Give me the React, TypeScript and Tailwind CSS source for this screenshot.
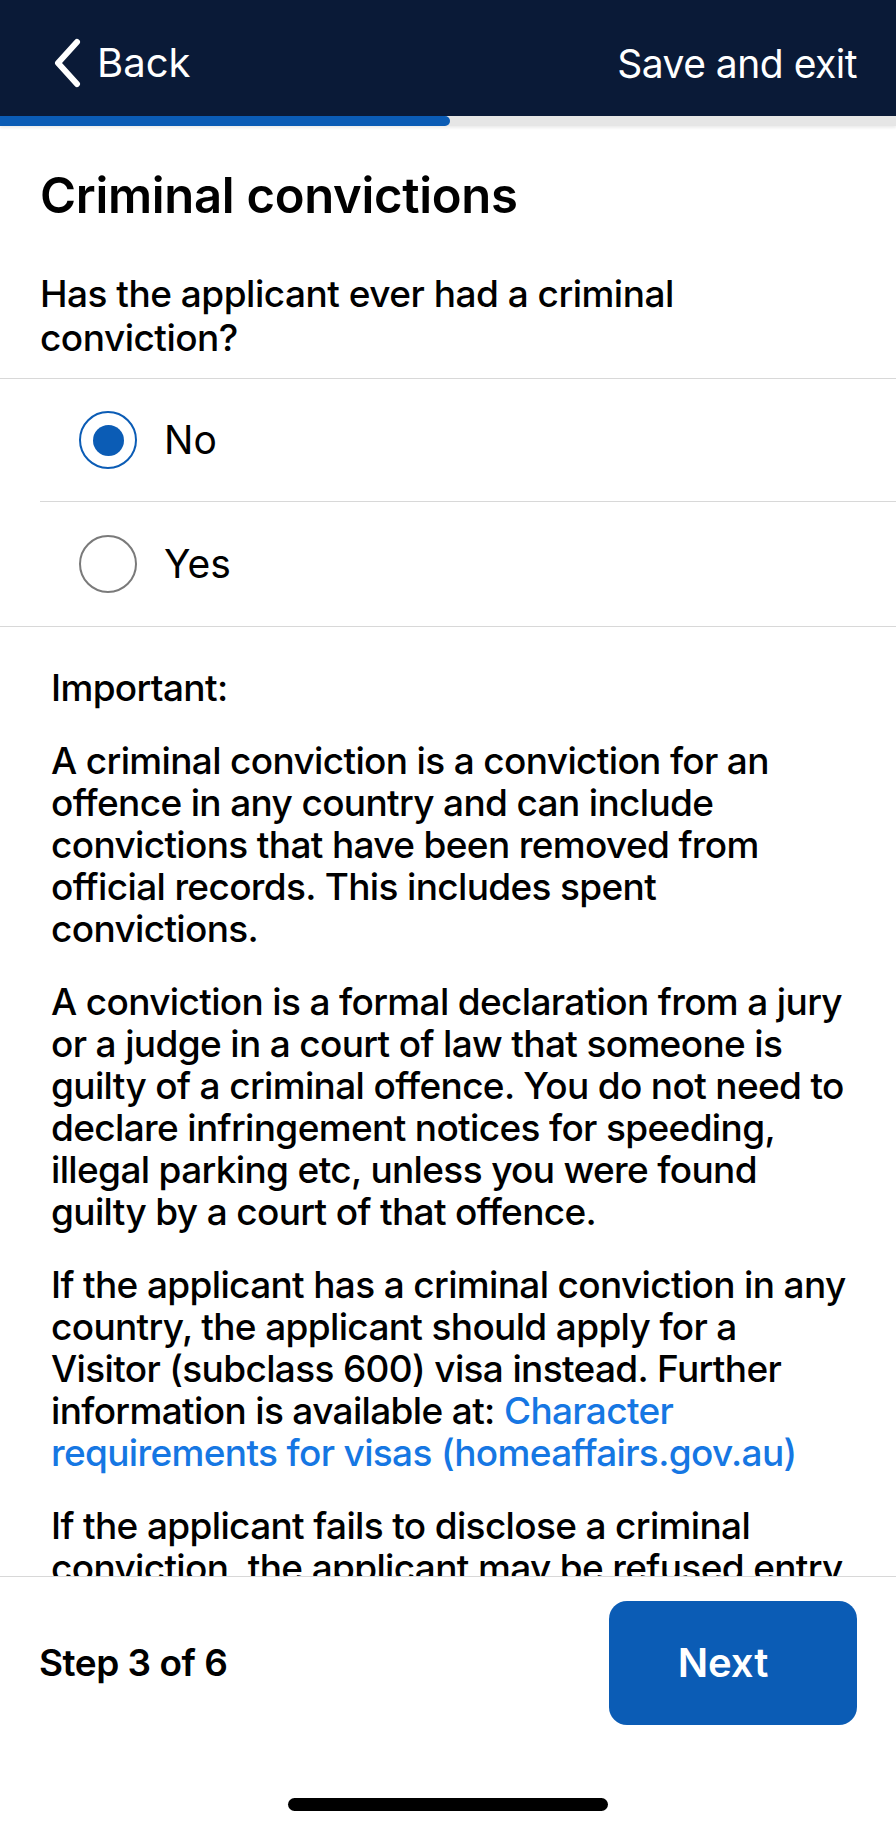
import { useState } from "react";

function Chevron() {
  return (
    <svg width="30" height="50" viewBox="0 0 30 50" fill="none">
      <path
        d="M25 4 L6 25 L25 46"
        stroke="white"
        strokeWidth="6"
        strokeLinecap="round"
        strokeLinejoin="round"
      />
    </svg>
  );
}

function Radio({ checked }: { checked: boolean }) {
  return (
    <span
      className={`flex h-[58px] w-[58px] shrink-0 items-center justify-center rounded-full border-[2.5px] ${
        checked ? "border-[#0b5cb5]" : "border-[#7a7a7a]"
      }`}
    >
      {checked && <span className="h-[31px] w-[31px] rounded-full bg-[#0b5cb5]" />}
    </span>
  );
}

export default function App() {
  const [answer, setAnswer] = useState<"no" | "yes">("no");

  return (
    <div
      className="flex h-[1830px] w-[896px] flex-col overflow-hidden bg-white text-black"
      style={{ fontFamily: "Inter, 'Noto Sans', sans-serif" }}
    >
      {/* top bar */}
      <header className="flex h-[116px] shrink-0 items-center justify-between bg-[#0a1a37] pl-[52px] pr-[39px] pt-[10px] text-white">
        <button className="flex items-center gap-[15px] text-[40px] leading-none">
          <Chevron />
          <span>Back</span>
        </button>
        <button className="text-[39px] leading-none tracking-[-0.5px]">Save and exit</button>
      </header>

      {/* progress */}
      <div className="flex h-[10px] shrink-0 bg-[#e6e6e6] shadow-[0_2px_3px_rgba(0,0,0,0.08)]">
        <div className="h-full w-[450px] rounded-r-full bg-[#0b5cb5]" />
      </div>

      <div className="shrink-0 px-[40px] pt-[41px]">
        <h1 className="text-[49px] font-semibold leading-[58px] tracking-[-0.3px]">
          Criminal convictions
        </h1>
        <p className="mt-[47px] pb-[18px] pr-[40px] text-[37px] font-medium leading-[44px] tracking-[-0.5px]">
          Has the applicant ever had a criminal conviction?
        </p>
      </div>

      {/* options */}
      <div className="shrink-0 border-y border-[#d8d8d8]">
        <div className="ml-[40px]">
          <label
            className="flex h-[123px] cursor-pointer items-center gap-[27px] border-b border-[#d8d8d8] pl-[39px]"
            onClick={() => setAnswer("no")}
          >
            <Radio checked={answer === "no"} />
            <span className="text-[39px]">No</span>
          </label>
          <label
            className="flex h-[124px] cursor-pointer items-center gap-[27px] pl-[39px]"
            onClick={() => setAnswer("yes")}
          >
            <Radio checked={answer === "yes"} />
            <span className="text-[39px]">Yes</span>
          </label>
        </div>
      </div>

      {/* info */}
      <div className="flex-1 overflow-hidden pl-[51px] pr-[46px] pt-[40px] text-[37px] font-medium leading-[42px] tracking-[-0.65px]">
        <div className="flex flex-col gap-[31px]">
          <p>Important:</p>
          <p>
            A criminal conviction is a conviction for an offence in any country and can
            include convictions that have been removed from official records. This
            includes spent convictions.
          </p>
          <p>
            A conviction is a formal declaration from a jury or a judge in a court of law
            that someone is guilty of a criminal offence. You do not need to declare
            infringement notices for speeding, illegal parking etc, unless you were found
            guilty by a court of that offence.
          </p>
          <p>
            If the applicant has a criminal conviction in any country, the applicant
            should apply for a Visitor (subclass 600) visa instead. Further information is
            available at:{" "}
            <a className="text-[#1677e3]">Character requirements for visas (homeaffairs.gov.au)</a>
          </p>
          <p>
            If the applicant fails to disclose a criminal conviction, the applicant may be
            refused entry to Australia or have their visa cancelled.
          </p>
        </div>
      </div>

      {/* footer */}
      <footer className="flex h-[254px] shrink-0 flex-col border-t border-[#d8d8d8]">
        <div className="flex items-center justify-between px-[39px] pt-[24px]">
          <span className="text-[37px] font-semibold tracking-[-0.5px]">Step 3 of 6</span>
          <button className="flex h-[124px] w-[248px] items-center justify-center rounded-[18px] bg-[#0b5cb5] pr-[20px] text-[40px] font-semibold text-white">
            Next
          </button>
        </div>
        <div className="mx-auto mt-[73px] h-[13px] w-[320px] rounded-full bg-black" />
      </footer>
    </div>
  );
}
